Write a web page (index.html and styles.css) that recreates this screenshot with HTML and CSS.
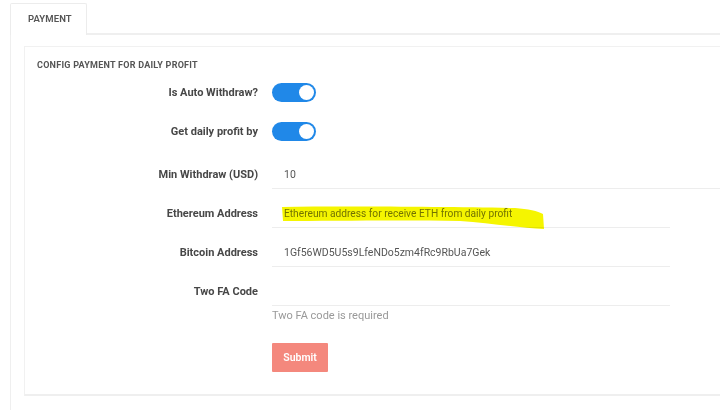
FILE: index.html
```html
<!DOCTYPE html>
<html>
<head>
<meta charset="utf-8">
<link rel="stylesheet" href="styles.css">
</head>
<body>
<div class="page">
  <div class="tabs">
    <div class="tab">PAYMENT</div>
    <div class="tab-rest"></div>
  </div>
  <div class="panel">
    <div class="box">
      <div class="heading">CONFIG PAYMENT FOR DAILY PROFIT</div>
      <div class="form">
        <div class="row toggle-row">
          <div class="label">Is Auto Withdraw?</div>
          <div class="control"><span class="switch"><span class="knob"></span></span></div>
        </div>
        <div class="row toggle-row">
          <div class="label">Get daily profit by</div>
          <div class="control"><span class="switch"><span class="knob"></span></span></div>
        </div>
        <div class="row input-row">
          <div class="label">Min Withdraw (USD)</div>
          <div class="control"><div class="input wide">10</div></div>
        </div>
        <div class="row input-row">
          <div class="label">Ethereum Address</div>
          <div class="control"><div class="input placeholder">Ethereum address for receive ETH from daily profit</div></div>
        </div>
        <div class="row input-row">
          <div class="label">Bitcoin Address</div>
          <div class="control"><div class="input">1Gf56WD5U5s9LfeNDo5zm4fRc9RbUa7Gek</div></div>
        </div>
        <div class="row input-row">
          <div class="label">Two FA Code</div>
          <div class="control"><div class="input"></div></div>
        </div>
        <div class="row">
          <div class="label"></div>
          <div class="control">
            <div class="error">Two FA code is required</div>
            <button class="submit">Submit</button>
          </div>
        </div>
      </div>
    </div>
  </div>
  <svg class="highlight" width="720" height="410" viewBox="0 0 720 410">
    <path d="M282,207 C350,206 450,207 515,208 C528,209 538,211 543,214 L544,229 C520,228 490,223 460,221 C400,220 330,221 283,221 Z" fill="#f5f500"/>
  </svg>
</div>
</body>
</html>
```
FILE: styles.css
```css
html, body {
  margin: 0;
  padding: 0;
  background: #ffffff;
  overflow: hidden;
}
body {
  font-family: Roboto, "Liberation Sans", sans-serif;
  color: #444;
}
.page {
  position: relative;
  width: 720px;
  height: 410px;
  overflow: hidden;
  padding-top: 3px;
  box-sizing: border-box;
}
.tabs {
  display: flex;
  margin-left: 10px;
  height: 32px;
}
.tab {
  width: 58px;
  padding: 0 0 0 17px;
  border: 1px solid #ececec;
  border-bottom: none;
  border-radius: 2px 2px 0 0;
  font-size: 9.5px;
  font-weight: 600;
  color: #555;
  line-height: 30px;
  letter-spacing: 0.1px;
}
.tab-rest {
  flex: 1;
  border-bottom: 2px solid #efefef;
}
.panel {
  margin-left: 10px;
  width: 760px;
  border-left: 1px solid #efefef;
  padding: 11px 0 0 13px;
  height: 400px;
}
.box {
  border: 1px solid #f1f1f1;
  border-right: none;
  border-bottom: 2px solid #efefef;
  padding: 12px 0 22px 0;
  width: 760px;
}
.heading {
  padding-left: 12px;
  font-size: 9px;
  font-weight: 700;
  line-height: 12px;
  color: #555;
  letter-spacing: 0.25px;
}
.form {
  margin-top: 2px;
  display: flex;
  flex-direction: column;
}
.row {
  display: grid;
  grid-template-columns: 233px 1fr;
  column-gap: 14px;
}
.toggle-row {
  height: 39px;
  align-items: center;
}
.input-row {
  height: 39px;
  padding-top: 7px;
  box-sizing: border-box;
}
.label {
  text-align: right;
  font-size: 11px;
  font-weight: 700;
  color: #474747;
  line-height: 26px;
  padding-top: 4px;
}
.toggle-row .label {
  line-height: 14px;
  padding-top: 1px;
}
.switch {
  display: flex;
  align-items: center;
  justify-content: flex-end;
  width: 44px;
  height: 19px;
  border-radius: 10px;
  background: #2088e8;
  padding: 0 2px;
  box-sizing: border-box;
}
.knob {
  width: 15px;
  height: 15px;
  border-radius: 50%;
  background: #ffffff;
}
.input {
  width: 398px;
  height: 31px;
  box-sizing: border-box;
  border-bottom: 1px solid #ededed;
  padding-left: 12px;
  padding-top: 4px;
  font-size: 10.5px;
  line-height: 26px;
  color: #555;
}
.input.wide {
  width: 460px;
}
.input.placeholder {
  color: #777;
  font-size: 10.2px;
}
.error {
  margin-top: 2px;
  font-size: 11px;
  line-height: 14px;
  color: #999;
}
.submit {
  display: block;
  margin-top: 20px;
  width: 56px;
  height: 29px;
  border: none;
  border-radius: 1px;
  background: #f4887d;
  color: #ffffff;
  font-family: Roboto, "Liberation Sans", sans-serif;
  font-size: 10.5px;
  font-weight: 600;
  padding: 0;
}
.highlight {
  position: absolute;
  left: 0;
  top: 0;
  mix-blend-mode: multiply;
  pointer-events: none;
}
```
